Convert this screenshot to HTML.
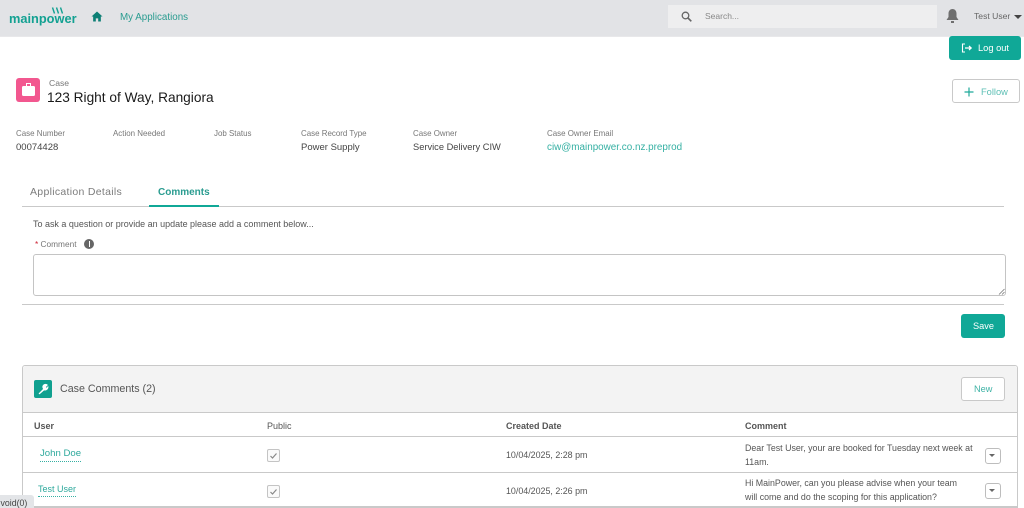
<!DOCTYPE html>
<html><head><meta charset="utf-8"><style>
html,body{margin:0;padding:0;background:#fff;width:1024px;height:508px;overflow:hidden}
body{position:relative;font-family:"Liberation Sans",sans-serif;color:#54565a}
#w{position:absolute;left:0;top:0;width:1024px;height:508px;filter:blur(.35px)}
.t{position:absolute;white-space:nowrap;line-height:1.2}
.b{position:absolute;box-sizing:border-box}
.l{font-size:7.950px;color:#777}
.v{font-size:9.300px;color:#444}
.g{color:#1fa99a}
.h{font-size:9px;color:#555;font-weight:bold}
.c{font-size:8.900px;color:#555}
.ln{position:absolute;background:#c9c9c9;height:1px}
.cb{position:absolute;width:11px;height:11px;border:1px solid #c4c4c4;border-radius:2px;background:#fafafa;box-sizing:content-box}
.dd{position:absolute;width:14px;height:14px;border:1px solid #bdbdbd;border-radius:3px;background:#fff}
.dd:after{content:"";position:absolute;left:3px;top:5px;border:3.500px solid transparent;border-top:3.500px solid #666;border-bottom:0}
</style></head><body><div id="w">
<div class="b" style="left:0;top:0;width:1024px;height:37px;background:#e2e3e6;border-bottom:1px solid #e8e8ea"></div>
<div class="t" style="left:9px;top:11px;font-size:12.800px;font-weight:bold;color:#13a192">mainpower</div>
<svg style="position:absolute;left:50px;top:6px" width="16" height="9" viewBox="0 0 16 9"><path d="M2.500 1.500l2 6M6.500 1.500l2 6M10.500 1.500l2 6" stroke="#13a192" stroke-width="1.400" fill="none"/></svg>
<svg style="position:absolute;left:91px;top:11px" width="12" height="11" viewBox="0 0 13 12"><path d="M6.500 0.500L0.500 6H2.300V11.500H5.200V8H7.800V11.500H10.700V6H12.500Z" fill="#0d7f75"/></svg>
<div class="t g" style="left:120px;top:12px;font-size:9.800px;color:#2a9c90">My Applications</div>
<div class="b" style="left:668px;top:5px;width:269px;height:23px;background:#eeeeef"></div>
<svg style="position:absolute;left:681px;top:11px" width="11" height="11" viewBox="0 0 11 11"><circle cx="4.500" cy="4.500" r="3.300" fill="none" stroke="#666" stroke-width="1.300"/><path d="M7 7l3.300 3.300" stroke="#666" stroke-width="1.600"/></svg>
<div class="t" style="left:705px;top:11px;font-size:8.500px;color:#888">Search...</div>
<svg style="position:absolute;left:945px;top:8px" width="15" height="16" viewBox="0 0 15 16"><path d="M7.500 1C5 1 3.500 3 3.500 5.500V9L1.500 12H13.500L11.500 9V5.500C11.500 3 10 1 7.500 1Z" fill="#6f6f6f"/><rect x="6" y="13" width="3" height="2" fill="#6f6f6f"/></svg>
<div class="t" style="left:974px;top:11px;font-size:8.600px;color:#666">Test User</div>
<div class="b" style="left:1014px;top:15px;width:0;height:0;border:4px solid transparent;border-top:4px solid #444;border-bottom:0"></div>

<div class="b" style="left:949px;top:36px;width:72px;height:24px;background:#10a897;border-radius:3px"></div>
<svg style="position:absolute;left:961px;top:43px" width="12" height="10" viewBox="0 0 12 10"><path d="M4 1H1.500V9H4" stroke="#fff" fill="none" stroke-width="1.100"/><path d="M4 5H10M8 3l2.200 2L8 7" stroke="#fff" fill="none" stroke-width="1.200"/></svg>
<div class="t" style="left:978px;top:43px;font-size:9.300px;color:#fff">Log out</div>

<div class="b" style="left:16px;top:78px;width:24px;height:24px;background:#f2578f;border-radius:3px"></div>
<div class="b" style="left:22px;top:86px;width:13px;height:10px;background:#fff;border-radius:1.500px"></div>
<div class="b" style="left:26px;top:83px;width:5px;height:3px;border:1px solid #fff;border-bottom:0"></div>
<div class="t" style="left:49px;top:78px;font-size:8.600px;color:#777">Case</div>
<div class="t" style="left:47px;top:90px;font-size:13.700px;color:#1a1a1a">123 Right of Way, Rangiora</div>

<div class="b" style="left:952px;top:79px;width:68px;height:24px;background:#fff;border:1px solid #c9c9c9;border-radius:3px"></div>
<svg style="position:absolute;left:964px;top:87px" width="10" height="10" viewBox="0 0 10 10"><path d="M5 .5V9.500M.5 5H9.500" stroke="#1fa99a" stroke-width="1.200"/></svg>
<div class="t g" style="left:981px;top:87px;font-size:9.300px;color:#5cbfb4">Follow</div>

<div class="t l" style="left:16px;top:129px">Case Number</div>
<div class="t l" style="left:113px;top:129px">Action Needed</div>
<div class="t l" style="left:214px;top:129px">Job Status</div>
<div class="t l" style="left:301px;top:129px">Case Record Type</div>
<div class="t l" style="left:413px;top:129px">Case Owner</div>
<div class="t l" style="left:547px;top:129px">Case Owner Email</div>
<div class="t v" style="left:16px;top:142px;font-size:9.500px">00074428</div>
<div class="t v" style="left:301px;top:142px;font-size:9.500px">Power Supply</div>
<div class="t v" style="left:413px;top:142px">Service Delivery CIW</div>
<div class="t g" style="left:547px;top:142px;font-size:9.900px;color:#35b0a3">ciw@mainpower.co.nz.preprod</div>

<div class="t" style="left:30px;top:186px;font-size:10.500px;color:#7c7c7c;letter-spacing:.3px">Application Details</div>
<div class="t" style="left:158px;top:187px;font-size:10px;font-weight:bold;color:#2a9c90">Comments</div>
<div class="ln" style="left:22px;top:206px;width:982px"></div>
<div class="b" style="left:149px;top:205px;width:70px;height:2px;background:#10a897"></div>
<div class="t c" style="left:33px;top:219px;font-size:8.980px">To ask a question or provide an update please add a comment below...</div>
<div class="t" style="left:35px;top:240px;font-size:8.300px;color:#777"><span style="color:#c23">*</span> Comment</div>
<div class="b" style="left:84px;top:239px;width:10px;height:10px;border-radius:50%;background:#666"></div>
<div class="b" style="left:88.500px;top:241px;width:1.500px;height:6px;background:#fff"></div>
<div class="b" style="left:33px;top:254px;width:973px;height:42px;border:1px solid #c4c4c4;border-radius:3px;background:#fff"></div>
<svg style="position:absolute;left:998px;top:288px" width="7" height="7" viewBox="0 0 7 7"><path d="M1 6.500L6.500 1M4 6.500L6.500 4" stroke="#777" stroke-width=".8"/></svg>
<div class="ln" style="left:22px;top:304px;width:982px"></div>
<div class="b" style="left:961px;top:314px;width:44px;height:24px;background:#10a897;border-radius:3px"></div>
<div class="t" style="left:973px;top:321px;font-size:9.200px;color:#fff">Save</div>

<div class="b" style="left:22px;top:365px;width:996px;height:143px;border:1px solid #c9c9c9;border-radius:3px 3px 0 0;background:#fff"></div>
<div class="b" style="left:23px;top:366px;width:994px;height:47px;background:#f3f3f3;border-bottom:1px solid #c9c9c9;border-radius:3px 3px 0 0"></div>
<div class="b" style="left:34px;top:380px;width:18px;height:18px;background:#10a08f;border-radius:2px"></div>
<svg style="position:absolute;left:37px;top:383px" width="12" height="12" viewBox="0 0 12 12"><path d="M2 10.500L6.500 6A2.800 2.800 0 0 1 10.500 2L8.700 3.800L9 4.800L10 5L11 3.500A3 3 0 0 1 7 7L2.500 11Z" fill="#fff" stroke="#fff" stroke-width=".6"/></svg>
<div class="t" style="left:60px;top:383px;font-size:10.700px;color:#555">Case Comments (2)</div>
<div class="b" style="left:961px;top:377px;width:44px;height:24px;background:#fff;border:1px solid #c9c9c9;border-radius:3px"></div>
<div class="t" style="left:974px;top:384px;font-size:9.200px;color:#3fb3a6">New</div>

<div class="t h" style="left:34px;top:421px">User</div>
<div class="t h" style="left:267px;top:421px;font-weight:normal">Public</div>
<div class="t h" style="left:506px;top:421px">Created Date</div>
<div class="t h" style="left:745px;top:421px">Comment</div>
<div class="ln" style="left:23px;top:436px;width:994px"></div>
<div class="ln" style="left:23px;top:472px;width:994px"></div>
<div class="ln" style="left:23px;top:506px;width:994px"></div>

<div class="t" style="left:40px;top:448px;font-size:9.600px;color:#2ea99c;border-bottom:1px dotted #36b0a3;padding-bottom:1px">John Doe</div>
<div class="t" style="left:38px;top:484px;font-size:9px;color:#2ea99c;border-bottom:1px dotted #36b0a3;padding-bottom:1px">Test User</div>
<div class="cb" style="left:267px;top:449px"></div>
<div class="cb" style="left:267px;top:485px"></div>
<svg style="position:absolute;left:269px;top:451px" width="9" height="9" viewBox="0 0 9 9"><path d="M1.500 5L3.500 7L7.500 2.500" stroke="#888" stroke-width="1.200" fill="none"/></svg>
<svg style="position:absolute;left:269px;top:487px" width="9" height="9" viewBox="0 0 9 9"><path d="M1.500 5L3.500 7L7.500 2.500" stroke="#888" stroke-width="1.200" fill="none"/></svg>
<div class="t c" style="left:506px;top:450px">10/04/2025, 2:28 pm</div>
<div class="t c" style="left:506px;top:486px">10/04/2025, 2:26 pm</div>
<div class="t c" style="left:745px;top:441px;line-height:14px;font-size:8.830px">Dear Test User, your are booked for Tuesday next week at<br>11am.</div>
<div class="t c" style="left:745px;top:476px;line-height:14px;font-size:8.830px">Hi MainPower, can you please advise when your team<br>will come and do the scoping for this application?</div>
<div class="dd" style="left:985px;top:448px"></div>
<div class="dd" style="left:985px;top:483px"></div>

<div class="b" style="left:0;top:495px;width:34px;height:13px;background:#e3e5e8;border-radius:0 3px 0 0"></div>
<div class="t" style="left:-2px;top:498px;font-size:8.800px;color:#444">:void(0)</div>
</div></body></html>
